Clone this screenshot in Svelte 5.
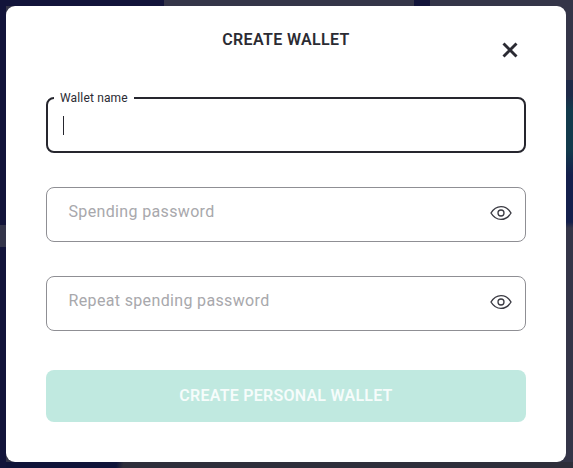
<script lang="ts">
  // Create wallet dialog over a dimmed page
  const passwordFields = ["Spending password", "Repeat spending password"];
</script>

<div class="backdrop">
  <div class="modal">
    <header class="head">
      <h1>CREATE WALLET</h1>
      <button class="close" aria-label="Close">
        <svg viewBox="0 0 16 16" width="16" height="16">
          <path d="M1.5 1.5 14.5 14.5M14.5 1.5 1.5 14.5" fill="none" stroke="#2b2b33" stroke-width="2.9" />
        </svg>
      </button>
    </header>

    <form class="form">
      <fieldset class="field active">
        <legend>Wallet name</legend>
        <span class="caret"></span>
      </fieldset>

      {#each passwordFields as placeholder}
        <div class="field">
          <span class="placeholder">{placeholder}</span>
          <svg class="eye" viewBox="0 0 22 16" width="22" height="16">
            <path d="M1 8C3.5 3.8 7 1.6 11 1.6S18.5 3.8 21 8C18.5 12.2 15 14.4 11 14.4S3.500 12.200 1 8Z" fill="none" stroke="#3a3a42" stroke-width="1.4" />
            <circle cx="11" cy="8" r="3" fill="none" stroke="#3a3a42" stroke-width="1.300" />
          </svg>
        </div>
      {/each}

      <button class="submit" type="button" disabled>CREATE PERSONAL WALLET</button>
    </form>
  </div>
</div>

<style>
  :global(body) {
    margin: 0;
  }

  .backdrop {
    box-sizing: border-box;
    width: 573px;
    height: 468px;
    padding: 6px 7px 6px 6px;
    font-family: Roboto, "Liberation Sans", sans-serif;
    background:
      linear-gradient(180deg, #12143a 0 225px, #33344a 225px 247px, #12143a 247px) 0 0 / 6px 100% no-repeat,
      linear-gradient(100deg, #0f1338 0 115px, #2e2e3a 122px) 0 100% / 100% 6px no-repeat,
      linear-gradient(90deg, #12143a 0 164px, #343548 164px 414px, #12143a 414px 430px, #343548 430px) 0 0 / 100% 6px no-repeat,
      linear-gradient(180deg, #343548 0 80px, #1e2a48 80px 95px, #123a4c 110px 150px, #141f4c 175px 222px, #343548 228px) 566px 0 / 7px 100% no-repeat,
      #343548;
  }

  .modal {
    box-sizing: border-box;
    height: 456px;
    padding: 0 40px;
    background: #fff;
    border-radius: 9px;
  }

  .head {
    position: relative;
    height: 92px;
    text-align: center;
  }

  h1 {
    margin: 0;
    padding-top: 24px;
    font-size: 16px;
    line-height: 19px;
    font-weight: 600;
    letter-spacing: 0.35px;
    color: #2b2b33;
  }

  .close {
    position: absolute;
    top: 36px;
    right: 8px;
    display: flex;
    padding: 0;
    border: none;
    background: none;
  }

  .form {
    display: flex;
    flex-direction: column;
  }

  .field {
    box-sizing: border-box;
    display: flex;
    align-items: center;
    justify-content: space-between;
    height: 55px;
    margin: 0 0 34px;
    padding: 0 13px 0 21.500px;
    border: 1px solid #8f8f94;
    border-radius: 8px;
  }

  .active {
    display: block;
    min-width: 0;
    height: 62px;
    margin: -7px 0 34px;
    padding: 0 0 0 6px;
    border: 2px solid #26262e;
  }

  legend {
    padding: 0 6px 0 6px;
    font-size: 12px;
    line-height: 14px;
    letter-spacing: 0.15px;
    color: #2b2b33;
  }

  .caret {
    display: block;
    width: 1px;
    height: 19px;
    margin: 11px 0 0 9px;
    background: #26262e;
  }

  .placeholder {
    margin-bottom: 6px;
    font-size: 16px;
    letter-spacing: 0.35px;
    color: #a8a8ac;
  }

  .eye {
    display: block;
    margin-bottom: 3px;
  }

  .submit {
    height: 52px;
    margin-top: 5px;
    padding: 0 0 2px;
    border: none;
    border-radius: 8px;
    background: #c0e9e0;
    color: #f6fcfb;
    font-family: inherit;
    font-size: 16px;
    font-weight: 600;
    letter-spacing: 0.25px;
  }
</style>
